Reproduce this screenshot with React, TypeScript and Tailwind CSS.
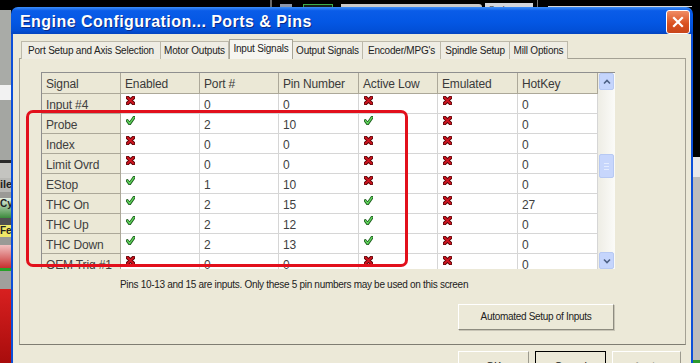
import React from 'react';

const tabs = [
  { label: 'Port Setup and Axis Selection', w: 'w-[140px]' },
  { label: 'Motor Outputs', w: 'w-[68px]' },
  { label: 'Input Signals', w: 'w-[64px]', active: true },
  { label: 'Output Signals', w: 'w-[70px]' },
  { label: "Encoder/MPG's", w: 'w-[78px]' },
  { label: 'Spindle Setup', w: 'w-[69px]' },
  { label: 'Mill Options', w: 'w-[58px]' },
];

const columns = [
  { label: 'Signal', w: 'w-[79px]' },
  { label: 'Enabled', w: 'w-[79px]' },
  { label: 'Port #', w: 'w-[79px]' },
  { label: 'Pin Number', w: 'w-[80px]' },
  { label: 'Active Low', w: 'w-[79px]' },
  { label: 'Emulated', w: 'w-[80px]' },
  { label: 'HotKey', w: 'w-[80px]' },
];

// signal, enabled, port, pin, active low, emulated, hotkey
const rows: [string, boolean, number, number, boolean, boolean, number][] = [
  ['Input #4', false, 0, 0, false, false, 0],
  ['Probe', true, 2, 10, true, false, 0],
  ['Index', false, 0, 0, false, false, 0],
  ['Limit Ovrd', false, 0, 0, false, false, 0],
  ['EStop', true, 1, 10, false, false, 0],
  ['THC On', true, 2, 15, true, false, 27],
  ['THC Up', true, 2, 12, true, false, 0],
  ['THC Down', true, 2, 13, true, false, 0],
  ['OEM Trig #1', false, 0, 0, false, false, 0],
];

function RedX() {
  return (
    <svg width="9" height="9" viewBox="0 0 9 9">
      <path d="M1.6 1.6 L7.4 7.4 M7.4 1.6 L1.6 7.4" stroke="#5c0608" strokeWidth="3.8" strokeLinecap="round" />
      <path d="M1.6 1.6 L7.4 7.4 M7.4 1.6 L1.6 7.4" stroke="#d01420" strokeWidth="2" strokeLinecap="round" />
    </svg>
  );
}

function GreenCheck() {
  return (
    <svg width="9" height="9" viewBox="0 0 9 9">
      <path d="M1.2 4.6 L3.6 7.8 L8.2 1.2" fill="none" stroke="#1d5e1d" strokeWidth="3" strokeLinejoin="round" strokeLinecap="round" />
      <path d="M1.4 4.8 L3.6 7.6 L8 1.4" fill="none" stroke="#62d45e" strokeWidth="1.4" strokeLinejoin="round" strokeLinecap="round" />
    </svg>
  );
}

function Flag({ on }: { on: boolean }) {
  return <div className="pl-[5px] pt-[2px]">{on ? <GreenCheck /> : <RedX />}</div>;
}

function Chevron({ up }: { up?: boolean }) {
  return (
    <svg width="8" height="6" viewBox="0 0 8 6">
      <path d={up ? 'M1 4.5 L4 1.5 L7 4.5' : 'M1 1.5 L4 4.5 L7 1.5'} fill="none" stroke="#4d6185" strokeWidth="1.6" />
    </svg>
  );
}

function TopStrip() {
  return (
    <div className="flex h-[7px] items-end bg-black">
      <div className="ml-[270px] h-[7px] w-[2px] bg-[#6a6a6a]" />
      <div className="ml-[8px] h-[3px] w-[12px] bg-[#8d96a8]" />
      <div className="ml-[11px] h-[3px] w-[30px] border-x border-t border-[#3cae4a] bg-[#182018]" />
      <div className="ml-[8px] h-[3px] w-[141px] rounded-tr-[3px] bg-[#c9c9c9]" />
      <div className="ml-[3px] h-[4px] w-[48px] overflow-hidden bg-[#d3d6dc] pl-[4px] text-[8px] leading-[12px] text-[#333]">Scale</div>
      <div className="ml-[4px] h-[7px] w-[1px] bg-[#777]" />
      <div className="ml-[10px] h-[1px] w-[144px] bg-[#d8d8d8]" />
    </div>
  );
}

function LeftStrip() {
  return (
    <div className="flex w-[11px] flex-col overflow-hidden text-[11px] font-bold leading-[12px] text-[#222]">
      <div className="h-[3px] bg-black" />
      <div className="h-[75px] bg-[#a9aba7]" />
      <div className="h-[15px] bg-[#f2f2f2]" />
      <div className="h-[60px] bg-[#a4a6a2]" />
      <div className="h-[3px] bg-[#2a2a2a]" />
      <div className="h-[15px] bg-[#c4c4c0]" />
      <div className="h-[14px] whitespace-nowrap bg-[#b8b8b4]">ile</div>
      <div className="h-[6px] bg-[#9a9a96]" />
      <div className="h-[20px] whitespace-nowrap bg-[linear-gradient(to_bottom,#e4f0e0,#3c8a3c)] text-[10px]">Cyc</div>
      <div className="h-[7px] bg-[#505050]" />
      <div className="h-[12px] whitespace-nowrap bg-[#f0e868] text-[10px]">Fe</div>
      <div className="h-[8px] bg-[#9a9a96]" />
      <div className="h-[23px] bg-[linear-gradient(to_bottom,#f0c0c0,#c83030)]" />
      <div className="h-[3px] bg-[#28a028]" />
      <div className="h-[18px] bg-[#a0a09c]" />
      <div className="flex-1 bg-[linear-gradient(to_bottom,#d82020,#a80c0c)]" />
    </div>
  );
}

function RightStrip() {
  return (
    <div className="flex w-[7px] flex-col">
      <div className="h-[150px] bg-black" />
      <div className="h-[20px] bg-[#e8e8ea]" />
      <div className="flex-1 bg-[#bcbcbc]" />
      <div className="h-[3px] bg-[#2c9a2c]" />
    </div>
  );
}

function Grid() {
  return (
    <div className="flex h-[197px] w-[574px] border-t border-[#8f8f8f]">
      <div className="h-[196px] w-[557px] overflow-hidden border-l border-[#8f8f8f]">
        <div className="flex h-[21px]">
          {columns.map((c) => (
            <div
              key={c.label}
              className={`${c.w} shrink-0 border-r border-b border-[#aca899] bg-[#ebe8d6] pl-[4px] pt-[2px] text-[12px] leading-[19px] tracking-[-0.15px] text-[#3a3a3a]`}
            >
              {c.label}
            </div>
          ))}
        </div>
        {rows.map(([name, en, port, pin, low, emu, hot]) => (
          <div key={name} className="flex h-[20px] text-[12px] leading-[18px] tracking-[-0.15px] text-[#404040]">
            <div className="w-[79px] shrink-0 whitespace-nowrap border-r border-b border-[#aca899] bg-[#ebe8d6] pl-[4px] pt-[2px]">{name}</div>
            <div className="w-[79px] shrink-0 border-r border-b border-[#d6d6d6] bg-white"><Flag on={en} /></div>
            <div className="w-[79px] shrink-0 border-r border-b border-[#d6d6d6] bg-white pl-[4px] pt-[2px]">{port}</div>
            <div className="w-[80px] shrink-0 border-r border-b border-[#d6d6d6] bg-white pl-[4px] pt-[2px]">{pin}</div>
            <div className="w-[79px] shrink-0 border-r border-b border-[#d6d6d6] bg-white"><Flag on={low} /></div>
            <div className="w-[80px] shrink-0 border-r border-b border-[#d6d6d6] bg-white"><Flag on={emu} /></div>
            <div className="w-[80px] shrink-0 border-r border-b border-[#d6d6d6] bg-white pl-[4px] pt-[2px]">{hot}</div>
          </div>
        ))}
      </div>
      <div className="flex h-[196px] w-[17px] flex-col bg-[linear-gradient(to_right,#eeede5,#fbfbf8)] px-[1px]">
        <div className="flex h-[17px] items-center justify-center rounded-[2px] border border-[#b7c9f3] bg-[#c5d5fc]">
          <Chevron up />
        </div>
        <div className="h-[64px]" />
        <div className="flex h-[24px] flex-col items-center justify-center gap-[2px] rounded-[2px] border border-[#b7c9f3] bg-[#c7d6fc]">
          <div className="h-px w-[5px] bg-[#e4ecff]" />
          <div className="h-px w-[5px] bg-[#e4ecff]" />
          <div className="h-px w-[5px] bg-[#e4ecff]" />
        </div>
        <div className="flex-1" />
        <div className="flex h-[17px] items-center justify-center rounded-[2px] border border-[#b7c9f3] bg-[#c5d5fc]">
          <Chevron />
        </div>
      </div>
    </div>
  );
}

function ClassicButton({ label, w, focus, dim }: { label: string; w: string; focus?: boolean; dim?: boolean }) {
  return (
    <div
      className={`${w} h-[23px] shrink-0 border ${
        focus ? 'border-black' : 'border-t-white border-l-white border-r-[#9c9a8e] border-b-[#9c9a8e]'
      } bg-[#ece9d8] pt-[6px] text-center text-[11px] tracking-[-0.3px] ${dim ? 'text-[#a7a69a]' : 'text-[#222]'}`}
    >
      {label}
    </div>
  );
}

function Window() {
  return (
    <div className="flex w-[682px] flex-col">
      <div className="flex h-[29px] items-start justify-between rounded-t-[7px] bg-[linear-gradient(to_bottom,#3d8ef8,#0a5ce8_14%,#0457e4_55%,#0250d8_85%,#0344bf)] pl-[9px] pr-[3px]">
        <div className="pt-[5px] text-[16px] font-bold leading-[20px] tracking-[0.45px] text-white [text-shadow:1px_1px_0_#0a2a88]">
          Engine Configuration... Ports &amp; Pins
        </div>
        <div className="mt-[3px] flex h-[24px] w-[24px] items-center justify-center rounded-[3px] border border-white bg-[linear-gradient(to_bottom,#f08c64,#d9501e_60%,#c8461a)]">
          <svg width="12" height="12" viewBox="0 0 12 12">
            <path d="M2 2 L10 10 M10 2 L2 10" stroke="white" strokeWidth="2.2" strokeLinecap="square" />
          </svg>
        </div>
      </div>
      <div className="flex-1 border-x-2 border-[#0c4fd8] bg-[#ece9d8] pl-[6px] pt-[5px]">
        <div className="ml-[2px] flex h-[20px] items-end">
          {tabs.map((t) =>
            t.active ? (
              <div
                key={t.label}
                className={`${t.w} relative z-10 h-[20px] shrink-0 border-x border-t border-[#a8a596] bg-[#f6f5f0] pt-[2px] text-center text-[10px] leading-[14px] tracking-[-0.2px] text-[#222]`}
              >
                {t.label}
              </div>
            ) : (
              <div
                key={t.label}
                className={`${t.w} h-[18px] shrink-0 border-r border-t border-[#bdb9aa] bg-[#efede4] pt-[2px] text-center text-[10px] leading-[14px] tracking-[-0.2px] text-[#222] first:border-l`}
              >
                {t.label}
              </div>
            )
          )}
        </div>
        <div className="-mt-px h-[287px] w-[667px] border border-[#a4a194] border-b-[#7f7d72] pl-[21px] pt-[13px]">
          <Grid />
          <div className="ml-[79px] mt-[9px] text-[10px] leading-[14px] tracking-[-0.3px] text-[#222]">
            Pins 10-13 and 15 are inputs. Only these 5 pin numbers may be used on this screen
          </div>
          <div className="ml-[417px] mt-[12px] h-[26px] w-[156px] border border-t-white border-l-white border-r-[#8e8c80] border-b-[#8e8c80] bg-[#ece9d8] text-center text-[10px] leading-[24px] tracking-[-0.3px] text-[#222] shadow-[1px_1px_0_#c8c5b6]">
            Automated Setup of Inputs
          </div>
        </div>
        <div className="ml-[439px] mt-[6px] flex gap-[6px]">
          <ClassicButton label="OK" w="w-[71px]" />
          <ClassicButton label="Cancel" w="w-[71px]" focus />
          <ClassicButton label="Apply" w="w-[69px]" dim />
        </div>
      </div>
    </div>
  );
}

export default function App() {
  return (
    <div className="relative h-[363px] w-[700px] overflow-hidden bg-black font-['Liberation_Sans',Arial,sans-serif]">
      <TopStrip />
      <div className="flex h-[356px]">
        <LeftStrip />
        <Window />
        <RightStrip />
      </div>
      <div className="pointer-events-none absolute left-[26px] top-[110px] h-[157px] w-[382px] rounded-[7px] border-[3px] border-[#e2101c]" />
    </div>
  );
}
